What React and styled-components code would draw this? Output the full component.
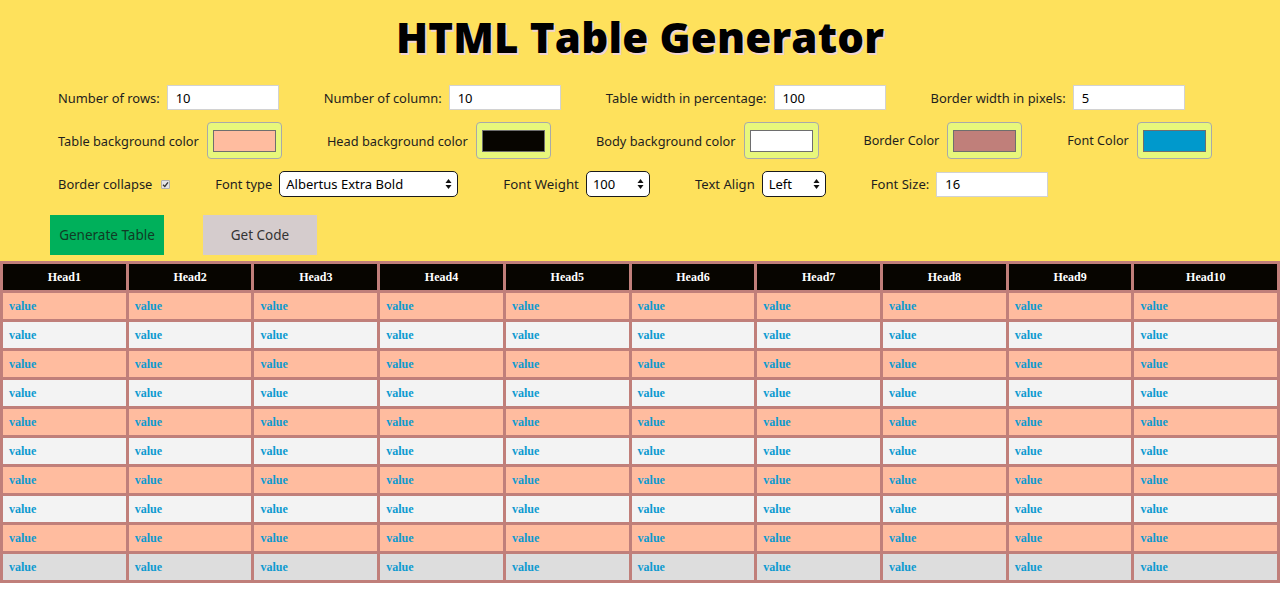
import React from "react";
import styled, { createGlobalStyle } from "styled-components";

const Global = createGlobalStyle`
  html, body { margin: 0; padding: 0; background: #ffffff; }
  body { font-family: "Noto Sans", "Liberation Sans", sans-serif; }
  * { box-sizing: border-box; }
`;

const Header = styled.header`
  background: #fee15c;
  padding-bottom: 6px;
`;

const Title = styled.h1`
  margin: 0;
  height: 85px;
  padding-top: 9px;
  text-align: center;
  font-family: "Open Sans", "Noto Sans", sans-serif;
  font-weight: 800;
  font-size: 42px;
  line-height: 56px;
  color: #000;
  text-shadow: 2px 2px 0 #f1d5d0;
  letter-spacing: 0.2px;
`;

const Row = styled.div`
  display: flex;
  align-items: center;
  height: ${(p) => p.$h}px;
  margin-top: ${(p) => p.$mt || 0}px;
  padding-left: ${(p) => (p.$pl != null ? p.$pl : 58)}px;
  gap: ${(p) => (p.$gap != null ? p.$gap : 45)}px;
`;

const Group = styled.div`
  display: flex;
  align-items: center;
  gap: ${(p) => (p.$gap != null ? p.$gap : 7)}px;
`;

const Label = styled.label`
  font-size: ${(p) => p.$fs || 12.9}px;
  color: #1e1e1e;
  white-space: nowrap;
`;

const TextInput = styled.input`
  width: 112px;
  height: 25px;
  border: 1px solid #d2d2d2;
  background: #fff;
  padding: 0 0 0 8px;
  font-family: "Noto Sans", sans-serif;
  font-size: 13px;
  color: #000;
  outline: none;
`;

const ColorBox = styled.div`
  width: 75px;
  height: 37px;
  background: #e8f77b;
  border: 1px solid #a9a9a9;
  border-radius: 4px;
  display: flex;
  align-items: center;
  justify-content: center;
`;

const Swatch = styled.div`
  width: 63px;
  height: 22px;
  border: 1px solid #6e6e6e;
  background: ${(p) => p.$c};
`;

const Check = styled.span`
  width: 9px;
  height: 9px;
  border: 1px solid #b0b0b0;
  background: #e4e4e4;
  border-radius: 1px;
  display: inline-flex;
  align-items: center;
  justify-content: center;
  margin-left: 2px;
`;

const SelectBox = styled.div`
  width: ${(p) => p.$w}px;
  height: 26px;
  border: 1px solid #1a1a1a;
  border-radius: 5px;
  background: #fff;
  display: flex;
  align-items: center;
  padding: 0 5px 0 6px;
`;

const Select = styled.select`
  appearance: none;
  -webkit-appearance: none;
  border: none;
  background: transparent;
  flex: 1;
  min-width: 0;
  font-family: "Noto Sans", sans-serif;
  font-size: 13px;
  color: #000;
  padding: 0;
  outline: none;
`;

const Button = styled.button`
  width: 114px;
  height: 40px;
  border: none;
  background: ${(p) => p.$bg};
  color: ${(p) => p.$fg};
  font-family: "Noto Sans", sans-serif;
  font-size: 13.5px;
  padding: 0;
  cursor: pointer;
`;

const Table = styled.table`
  width: 100%;
  table-layout: auto;
  border-collapse: separate;
  border-spacing: 0;
  border-left: 3px solid #c07f7a;
  border-top: 3px solid #c07f7a;
`;

const Th = styled.th`
  height: 29px;
  background: #070500;
  color: #fff;
  border-right: 3px solid #c07f7a;
  border-bottom: 3px solid #c07f7a;
  font-family: "Liberation Serif", serif;
  font-weight: 700;
  font-size: 12px;
  text-align: center;
  padding: 0 1px;
`;

const Td = styled.td`
  height: 29px;
  background: ${(p) => p.$bg};
  color: #0d9ad0;
  border-right: 3px solid #c07f7a;
  border-bottom: 3px solid #c07f7a;
  font-family: "Liberation Serif", serif;
  font-weight: 700;
  font-size: 12px;
  text-align: left;
  padding: 0 0 0 6px;
`;

const Arrows = () => (
  <svg width="7" height="12" viewBox="0 0 7 12">
    <path d="M3.5 1 L6.5 5 L0.5 5 Z" fill="#111" />
    <path d="M3.5 11 L6.5 7 L0.5 7 Z" fill="#111" />
  </svg>
);

const CheckMark = () => (
  <svg width="7" height="7" viewBox="0 0 7 7">
    <path d="M1 3.8 L2.8 5.5 L6 1.3" stroke="#333" strokeWidth="1.3" fill="none" />
  </svg>
);

const cols = Array.from({ length: 10 }, (_, i) => i + 1);
const rows = Array.from({ length: 10 }, (_, i) => i);

function rowBg(i) {
  if (i === 9) return "#dddddd";
  return i % 2 === 0 ? "#ffbc9f" : "#f3f3f3";
}

export default function App() {
  return (
    <>
      <Global />
      <Header>
        <Title>HTML Table Generator</Title>
        <Row $h={25}>
          <Group>
            <Label>Number of rows:</Label>
            <TextInput defaultValue="10" />
          </Group>
          <Group>
            <Label>Number of column:</Label>
            <TextInput defaultValue="10" />
          </Group>
          <Group>
            <Label $fs={13}>Table width in percentage:</Label>
            <TextInput defaultValue="100" />
          </Group>
          <Group>
            <Label $fs={12.9}>Border width in pixels:</Label>
            <TextInput defaultValue="5" />
          </Group>
        </Row>
        <Row $h={37} $mt={12}>
          <Group $gap={8}>
            <Label $fs={12.8}>Table background color</Label>
            <ColorBox><Swatch $c="#ffbc9f" /></ColorBox>
          </Group>
          <Group $gap={8}>
            <Label $fs={12.8}>Head background color</Label>
            <ColorBox><Swatch $c="#070500" /></ColorBox>
          </Group>
          <Group $gap={8}>
            <Label $fs={12.8}>Body background color</Label>
            <ColorBox><Swatch $c="#ffffff" /></ColorBox>
          </Group>
          <Group $gap={8}>
            <Label $fs={12.6}>Border Color</Label>
            <ColorBox><Swatch $c="#c07f7a" /></ColorBox>
          </Group>
          <Group $gap={8}>
            <Label $fs={12.6}>Font Color</Label>
            <ColorBox><Swatch $c="#0099cc" /></ColorBox>
          </Group>
        </Row>
        <Row $h={26} $mt={12}>
          <Group>
            <Label>Border collapse</Label>
            <Check><CheckMark /></Check>
          </Group>
          <Group>
            <Label>Font type</Label>
            <SelectBox $w={179}>
              <Select defaultValue="Albertus Extra Bold">
                <option>Albertus Extra Bold</option>
              </Select>
              <Arrows />
            </SelectBox>
          </Group>
          <Group>
            <Label $fs={13.3}>Font Weight</Label>
            <SelectBox $w={64}>
              <Select defaultValue="100">
                <option>100</option>
              </Select>
              <Arrows />
            </SelectBox>
          </Group>
          <Group>
            <Label $fs={13.1}>Text Align</Label>
            <SelectBox $w={64}>
              <Select defaultValue="Left">
                <option>Left</option>
              </Select>
              <Arrows />
            </SelectBox>
          </Group>
          <Group>
            <Label $fs={13.1}>Font Size:</Label>
            <TextInput defaultValue="16" />
          </Group>
        </Row>
        <Row $h={40} $mt={18} $pl={50} $gap={39}>
          <Button $bg="#00b05b" $fg="#103b25">Generate Table</Button>
          <Button $bg="#d5cccd" $fg="#333">Get Code</Button>
        </Row>
      </Header>
      <Table>
        <thead>
          <tr>
            {cols.map((c) => (
              <Th key={c}>Head{c}</Th>
            ))}
          </tr>
        </thead>
        <tbody>
          {rows.map((r) => (
            <tr key={r}>
              {cols.map((c) => (
                <Td key={c} $bg={rowBg(r)}>value</Td>
              ))}
            </tr>
          ))}
        </tbody>
      </Table>
    </>
  );
}
